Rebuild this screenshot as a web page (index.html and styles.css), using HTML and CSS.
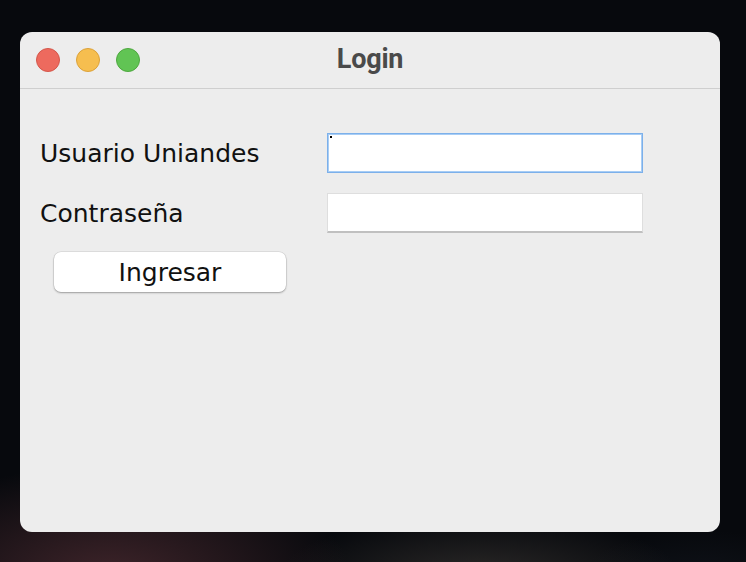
FILE: index.html
```html
<!DOCTYPE html>
<html lang="es">
<head>
<meta charset="utf-8">
<title>Login</title>
<link rel="stylesheet" href="styles.css">
</head>
<body>
<div class="window">
  <div class="titlebar">
    <div class="lights">
      <span class="light red"></span>
      <span class="light yellow"></span>
      <span class="light green"></span>
    </div>
    <div class="title">Login</div>
    <div></div>
  </div>
  <div class="content">
    <div class="form">
      <label class="label">Usuario Uniandes</label>
      <div class="field focused"><span class="caret"></span></div>
      <label class="label">Contraseña</label>
      <div class="field"></div>
    </div>
    <button class="btn">Ingresar</button>
  </div>
</div>
</body>
</html>
```
FILE: styles.css
```css
html, body {
  margin: 0;
  padding: 0;
}
body {
  width: 746px;
  height: 562px;
  overflow: hidden;
  background:
    radial-gradient(ellipse 240px 110px at 110px 575px, rgba(75, 42, 48, 0.8), rgba(75, 42, 48, 0) 100%),
    radial-gradient(ellipse 200px 60px at 480px 575px, rgba(65, 60, 56, 0.6), rgba(65, 60, 56, 0) 100%),
    radial-gradient(ellipse 120px 50px at 700px 580px, rgba(20, 24, 32, 0.6), rgba(20, 24, 32, 0) 100%),
    #07090d;
  padding-top: 32px;
  box-sizing: border-box;
  font-family: "DejaVu Sans", "Noto Sans", sans-serif;
}
.window {
  margin-left: 20px;
  width: 700px;
  height: 500px;
  border-radius: 12px;
  background: #ededed;
  overflow: hidden;
}
.titlebar {
  height: 56px;
  border-bottom: 1px solid #cfcfcf;
  display: grid;
  grid-template-columns: 1fr auto 1fr;
  align-items: center;
}
.lights {
  display: flex;
  gap: 16px;
  padding-left: 16px;
}
.light {
  width: 24px;
  height: 24px;
  border-radius: 50%;
  box-sizing: border-box;
}
.red { background: #ed6a5e; border: 1px solid #d4574b; }
.yellow { background: #f6be4f; border: 1px solid #dca23a; }
.green { background: #61c454; border: 1px solid #4ea83f; }
.title {
  font-family: "Roboto", "Liberation Sans", sans-serif;
  font-weight: 700;
  font-size: 27px;
  color: #4a4a4a;
  letter-spacing: -0.2px;
  margin-top: -3px;
}
.content {
  padding: 44px 20px 0 20px;
}
.form {
  display: grid;
  grid-template-columns: 287px 316px;
  row-gap: 20px;
  align-items: center;
}
.label {
  font-size: 25px;
  color: #111;
}
.field {
  height: 40px;
  box-sizing: border-box;
  background: #fff;
  border: 1px solid #dedede;
  border-bottom: 2px solid #c0c0c0;
  position: relative;
}
.field.focused {
  border: 1px solid #7cb0ea;
  box-shadow: inset 0 0 0 1px #a8cdf5;
}
.caret {
  position: absolute;
  left: 2px;
  top: 2px;
  width: 2px;
  height: 2px;
  background: #000;
}
.btn {
  display: block;
  margin-top: 19px;
  margin-left: 14px;
  width: 232px;
  height: 40px;
  border: none;
  border-radius: 7px;
  background: #fff;
  box-shadow: 0 0 0 0.5px rgba(0, 0, 0, 0.12), 0 1px 2px rgba(0, 0, 0, 0.3);
  font-family: "DejaVu Sans", "Noto Sans", sans-serif;
  font-size: 25px;
  color: #111;
  padding: 0;
}
```
